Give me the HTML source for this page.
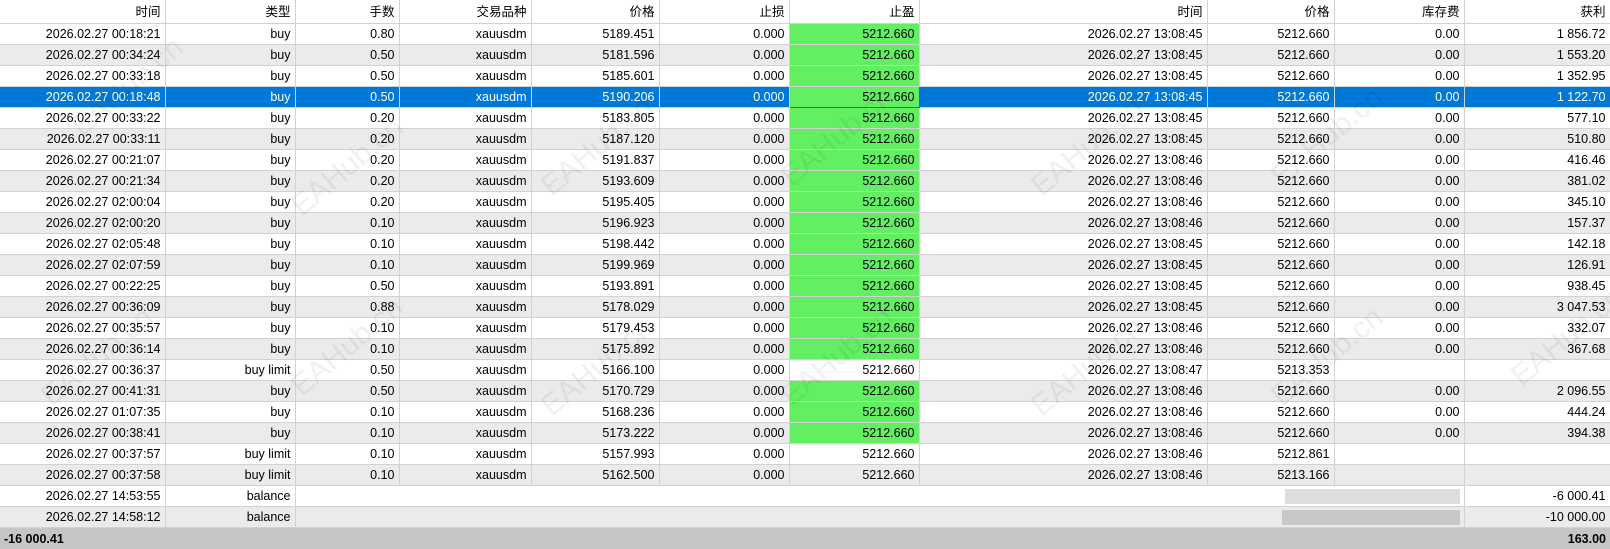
<!DOCTYPE html>
<html><head><meta charset="utf-8"><style>
html,body{margin:0;padding:0;background:#fff;width:1610px;height:549px;overflow:hidden}
table{border-collapse:collapse;table-layout:fixed;width:1610px;font-family:"Liberation Sans","Noto Sans CJK SC",sans-serif;font-size:12.5px;color:#000}
td,th{border-right:1px solid #d2d2d2;border-bottom:1px solid #d2d2d2;text-align:right;padding:0 4px 0 0;white-space:nowrap;overflow:hidden;height:20px;line-height:20px}
th{font-weight:normal;height:23px;background:#fff}
tr.g td{background:#ebebeb}
tr.s td{background:#0078d7;color:#fff}
td.tp,tr.g td.tp,tr.s td.tp{background:#62f062;color:#000;border:1px solid #d2d2d2}
tr.s td.tp{border:1px solid #3a6a9a}
tr.f td{background:#c6c6c6;font-weight:bold;border:none;height:21px}
.blur{display:inline-block;width:175px;height:15px;background:#d8d8d8;vertical-align:middle;margin-right:0}
.wm{position:absolute;font-family:"Liberation Sans",sans-serif;font-size:30px;color:rgba(0,0,0,0.06);transform:rotate(-40deg);pointer-events:none}
</style></head><body>
<table>
<colgroup><col style="width:165px"><col style="width:130px"><col style="width:104px"><col style="width:132px"><col style="width:128px"><col style="width:130px"><col style="width:130px"><col style="width:288px"><col style="width:127px"><col style="width:130px"><col style="width:146px"></colgroup>
<tr><th>时间</th><th>类型</th><th>手数</th><th>交易品种</th><th>价格</th><th>止损</th><th>止盈</th><th>时间</th><th>价格</th><th>库存费</th><th>获利</th></tr>
<tr><td>2026.02.27 00:18:21</td><td>buy</td><td>0.80</td><td>xauusdm</td><td>5189.451</td><td>0.000</td><td class="tp">5212.660</td><td>2026.02.27 13:08:45</td><td>5212.660</td><td>0.00</td><td>1 856.72</td></tr>
<tr class="g"><td>2026.02.27 00:34:24</td><td>buy</td><td>0.50</td><td>xauusdm</td><td>5181.596</td><td>0.000</td><td class="tp">5212.660</td><td>2026.02.27 13:08:45</td><td>5212.660</td><td>0.00</td><td>1 553.20</td></tr>
<tr><td>2026.02.27 00:33:18</td><td>buy</td><td>0.50</td><td>xauusdm</td><td>5185.601</td><td>0.000</td><td class="tp">5212.660</td><td>2026.02.27 13:08:45</td><td>5212.660</td><td>0.00</td><td>1 352.95</td></tr>
<tr class="s"><td>2026.02.27 00:18:48</td><td>buy</td><td>0.50</td><td>xauusdm</td><td>5190.206</td><td>0.000</td><td class="tp">5212.660</td><td>2026.02.27 13:08:45</td><td>5212.660</td><td>0.00</td><td>1 122.70</td></tr>
<tr><td>2026.02.27 00:33:22</td><td>buy</td><td>0.20</td><td>xauusdm</td><td>5183.805</td><td>0.000</td><td class="tp">5212.660</td><td>2026.02.27 13:08:45</td><td>5212.660</td><td>0.00</td><td>577.10</td></tr>
<tr class="g"><td>2026.02.27 00:33:11</td><td>buy</td><td>0.20</td><td>xauusdm</td><td>5187.120</td><td>0.000</td><td class="tp">5212.660</td><td>2026.02.27 13:08:45</td><td>5212.660</td><td>0.00</td><td>510.80</td></tr>
<tr><td>2026.02.27 00:21:07</td><td>buy</td><td>0.20</td><td>xauusdm</td><td>5191.837</td><td>0.000</td><td class="tp">5212.660</td><td>2026.02.27 13:08:46</td><td>5212.660</td><td>0.00</td><td>416.46</td></tr>
<tr class="g"><td>2026.02.27 00:21:34</td><td>buy</td><td>0.20</td><td>xauusdm</td><td>5193.609</td><td>0.000</td><td class="tp">5212.660</td><td>2026.02.27 13:08:46</td><td>5212.660</td><td>0.00</td><td>381.02</td></tr>
<tr><td>2026.02.27 02:00:04</td><td>buy</td><td>0.20</td><td>xauusdm</td><td>5195.405</td><td>0.000</td><td class="tp">5212.660</td><td>2026.02.27 13:08:46</td><td>5212.660</td><td>0.00</td><td>345.10</td></tr>
<tr class="g"><td>2026.02.27 02:00:20</td><td>buy</td><td>0.10</td><td>xauusdm</td><td>5196.923</td><td>0.000</td><td class="tp">5212.660</td><td>2026.02.27 13:08:46</td><td>5212.660</td><td>0.00</td><td>157.37</td></tr>
<tr><td>2026.02.27 02:05:48</td><td>buy</td><td>0.10</td><td>xauusdm</td><td>5198.442</td><td>0.000</td><td class="tp">5212.660</td><td>2026.02.27 13:08:45</td><td>5212.660</td><td>0.00</td><td>142.18</td></tr>
<tr class="g"><td>2026.02.27 02:07:59</td><td>buy</td><td>0.10</td><td>xauusdm</td><td>5199.969</td><td>0.000</td><td class="tp">5212.660</td><td>2026.02.27 13:08:45</td><td>5212.660</td><td>0.00</td><td>126.91</td></tr>
<tr><td>2026.02.27 00:22:25</td><td>buy</td><td>0.50</td><td>xauusdm</td><td>5193.891</td><td>0.000</td><td class="tp">5212.660</td><td>2026.02.27 13:08:45</td><td>5212.660</td><td>0.00</td><td>938.45</td></tr>
<tr class="g"><td>2026.02.27 00:36:09</td><td>buy</td><td>0.88</td><td>xauusdm</td><td>5178.029</td><td>0.000</td><td class="tp">5212.660</td><td>2026.02.27 13:08:45</td><td>5212.660</td><td>0.00</td><td>3 047.53</td></tr>
<tr><td>2026.02.27 00:35:57</td><td>buy</td><td>0.10</td><td>xauusdm</td><td>5179.453</td><td>0.000</td><td class="tp">5212.660</td><td>2026.02.27 13:08:46</td><td>5212.660</td><td>0.00</td><td>332.07</td></tr>
<tr class="g"><td>2026.02.27 00:36:14</td><td>buy</td><td>0.10</td><td>xauusdm</td><td>5175.892</td><td>0.000</td><td class="tp">5212.660</td><td>2026.02.27 13:08:46</td><td>5212.660</td><td>0.00</td><td>367.68</td></tr>
<tr><td>2026.02.27 00:36:37</td><td>buy limit</td><td>0.50</td><td>xauusdm</td><td>5166.100</td><td>0.000</td><td>5212.660</td><td>2026.02.27 13:08:47</td><td>5213.353</td><td></td><td></td></tr>
<tr class="g"><td>2026.02.27 00:41:31</td><td>buy</td><td>0.50</td><td>xauusdm</td><td>5170.729</td><td>0.000</td><td class="tp">5212.660</td><td>2026.02.27 13:08:46</td><td>5212.660</td><td>0.00</td><td>2 096.55</td></tr>
<tr><td>2026.02.27 01:07:35</td><td>buy</td><td>0.10</td><td>xauusdm</td><td>5168.236</td><td>0.000</td><td class="tp">5212.660</td><td>2026.02.27 13:08:46</td><td>5212.660</td><td>0.00</td><td>444.24</td></tr>
<tr class="g"><td>2026.02.27 00:38:41</td><td>buy</td><td>0.10</td><td>xauusdm</td><td>5173.222</td><td>0.000</td><td class="tp">5212.660</td><td>2026.02.27 13:08:46</td><td>5212.660</td><td>0.00</td><td>394.38</td></tr>
<tr><td>2026.02.27 00:37:57</td><td>buy limit</td><td>0.10</td><td>xauusdm</td><td>5157.993</td><td>0.000</td><td>5212.660</td><td>2026.02.27 13:08:46</td><td>5212.861</td><td></td><td></td></tr>
<tr class="g"><td>2026.02.27 00:37:58</td><td>buy limit</td><td>0.10</td><td>xauusdm</td><td>5162.500</td><td>0.000</td><td>5212.660</td><td>2026.02.27 13:08:46</td><td>5213.166</td><td></td><td></td></tr>
<tr><td>2026.02.27 14:53:55</td><td>balance</td><td colspan="8"><span class="blur" style="background:#dedede"></span></td><td>-6 000.41</td></tr>
<tr class="g"><td>2026.02.27 14:58:12</td><td>balance</td><td colspan="8"><span class="blur" style="background:#c8c8c8;width:178px"></span></td><td>-10 000.00</td></tr>
<tr class="f"><td colspan="2" style="text-align:left;padding-left:4px">-16 000.41</td><td colspan="8"></td><td>163.00</td></tr>
</table>
<div class="wm" style="left:60px;top:70px">EAHub.cn</div>
<div class="wm" style="left:280px;top:150px">EAHub.cn</div>
<div class="wm" style="left:530px;top:130px">EAHub.cn</div>
<div class="wm" style="left:770px;top:120px">EAHub.cn</div>
<div class="wm" style="left:1020px;top:130px">EAHub.cn</div>
<div class="wm" style="left:1260px;top:120px">EAHub.cn</div>
<div class="wm" style="left:30px;top:340px">EAHub.cn</div>
<div class="wm" style="left:280px;top:330px">EAHub.cn</div>
<div class="wm" style="left:530px;top:350px">EAHub.cn</div>
<div class="wm" style="left:770px;top:340px">EAHub.cn</div>
<div class="wm" style="left:1020px;top:350px">EAHub.cn</div>
<div class="wm" style="left:1260px;top:340px">EAHub.cn</div>
<div class="wm" style="left:1500px;top:320px">EAHub.cn</div>
</body></html>
